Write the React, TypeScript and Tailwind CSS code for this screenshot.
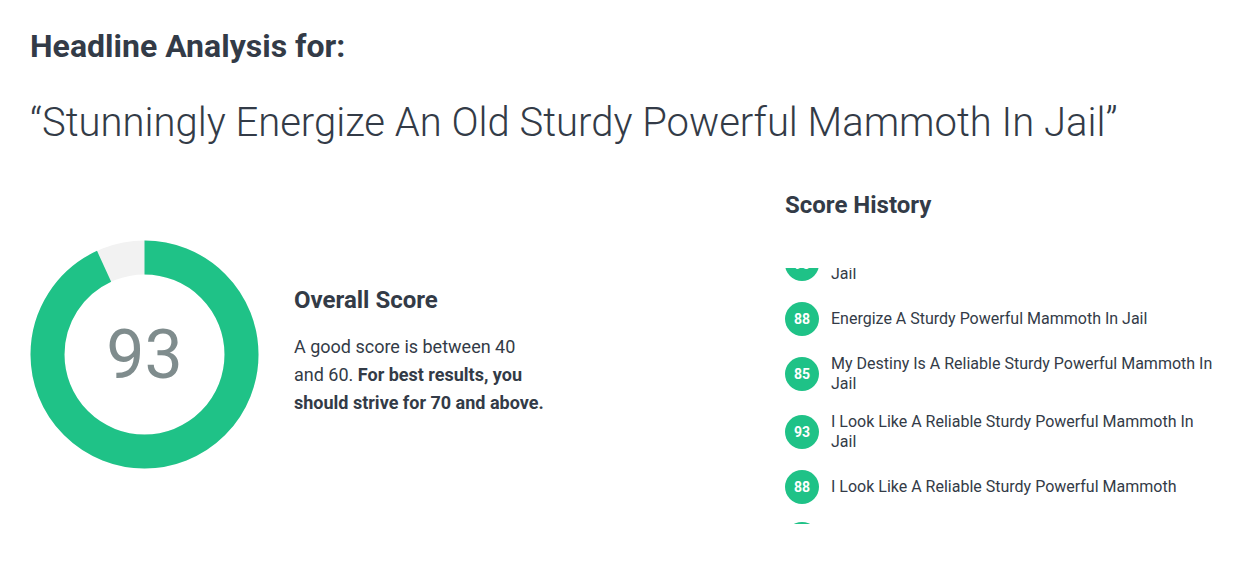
import React from "react";

const history = [
  { score: 90, text: "Stunningly Energize A Sturdy Powerful Mammoth In Jail" },
  { score: 88, text: "Energize A Sturdy Powerful Mammoth In Jail" },
  { score: 85, text: "My Destiny Is A Reliable Sturdy Powerful Mammoth In Jail" },
  { score: 93, text: "I Look Like A Reliable Sturdy Powerful Mammoth In Jail" },
  { score: 88, text: "I Look Like A Reliable Sturdy Powerful Mammoth" },
  { score: 80, text: "A Reliable Sturdy Powerful Mammoth" },
];

function Donut({ value }: { value: number }) {
  const r = 97;
  const c = 2 * Math.PI * r;
  return (
    <div className="relative w-[229px] h-[229px] shrink-0">
      <svg width="229" height="229" viewBox="0 0 229 229" className="block">
        <circle cx="114.5" cy="114.5" r={r} fill="none" stroke="#f2f2f2" strokeWidth="34" />
        <circle
          cx="114.5"
          cy="114.5"
          r={r}
          fill="none"
          stroke="#1fc287"
          strokeWidth="34"
          strokeDasharray={`${(c * value) / 100} ${c}`}
          transform="rotate(-90 114.5 114.5)"
        />
      </svg>
      <div className="absolute inset-0 flex items-center justify-center text-[68px] font-normal text-[#7f8c8d] leading-none">
        {value}
      </div>
    </div>
  );
}

export default function App() {
  return (
    <div
      className="w-[1250px] h-[571px] bg-white text-[#333b47] px-[30px] pt-[26px] overflow-hidden"
      style={{ fontFamily: "Roboto, 'Liberation Sans', sans-serif" }}
    >
      <h1 className="text-[32px] font-bold leading-[40px]">Headline Analysis for:</h1>
      <h2 className="mt-[33px] text-[40px] font-light leading-[48px]">
        “Stunningly Energize An Old Sturdy Powerful Mammoth In Jail”
      </h2>
      <div className="flex items-start mt-[43px]">
        <div className="flex items-center pt-[50px] w-[755px]">
          <Donut value={93} />
          <div className="ml-[35px] w-[254px] -mt-[8px]">
            <h3 className="text-[24px] font-bold leading-[30px]">Overall Score</h3>
            <p className="mt-[18px] text-[18px] leading-[28px] font-normal">
              A good score is between 40 and 60.{" "}
              <span className="font-bold">For best results, you should strive for 70 and above.</span>
            </p>
          </div>
        </div>
        <div className="flex-1 flex flex-col">
          <h3 className="text-[24px] font-bold leading-[30px]">Score History</h3>
          <div className="mt-[48px] h-[256px] w-[432px] overflow-hidden">
            <div className="-mt-[24px] flex flex-col gap-[18px]">
              {history.map((h, i) => (
                <div key={i} className="flex items-center gap-[12px]">
                  <div className="w-[34px] h-[34px] rounded-full bg-[#1fc287] text-white text-[14px] font-bold flex items-center justify-center shrink-0">
                    {h.score}
                  </div>
                  <div className="w-[387px] text-[16px] leading-[20px]">{h.text}</div>
                </div>
              ))}
            </div>
          </div>
        </div>
      </div>
    </div>
  );
}
